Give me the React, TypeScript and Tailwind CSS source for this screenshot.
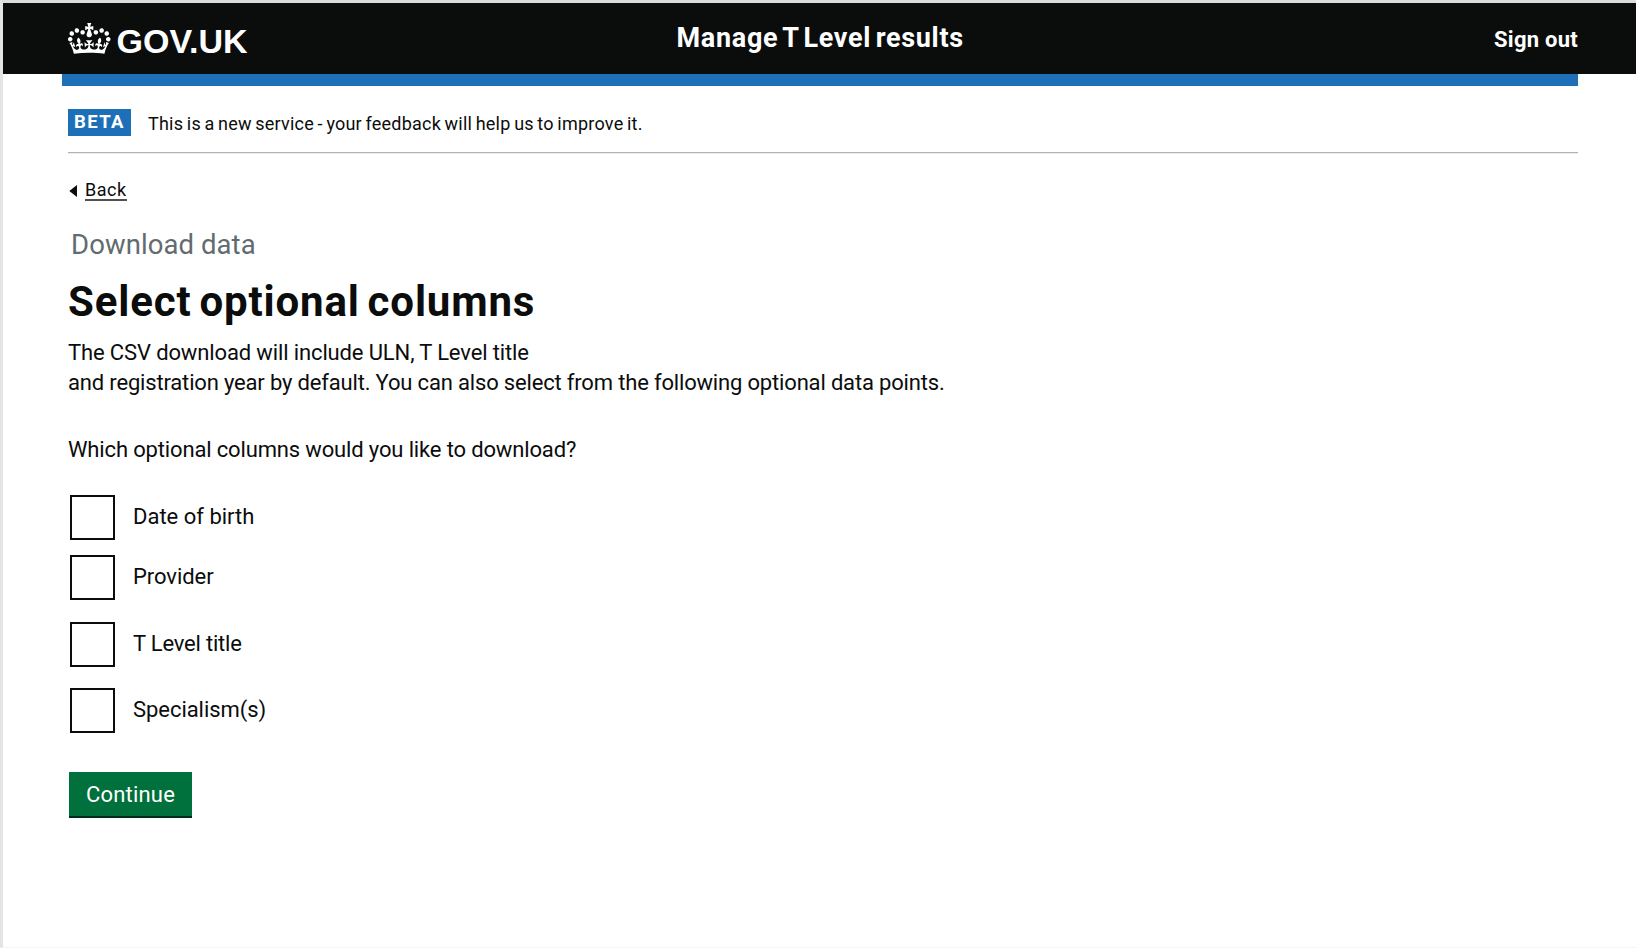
function Crown() {
  return (
    <svg viewBox="0 0 132 97" preserveAspectRatio="none" className="mt-[19.5px] h-[31px] w-[42.5px] shrink-0 fill-white" aria-hidden="true">
      <path d="M25 30.2c3.5 1.5 7.7-.2 9.1-3.7 1.5-3.6-.2-7.8-3.9-9.2-3.6-1.4-7.6.3-9.1 3.9-1.4 3.5.3 7.5 3.9 9zM9 39.5c3.6 1.5 7.8-.2 9.2-3.7 1.5-3.6-.2-7.8-3.9-9.1-3.6-1.5-7.6.2-9.1 3.8-1.4 3.5.3 7.5 3.8 9zM4.4 57.2c3.5 1.5 7.7-.2 9.1-3.8 1.5-3.6-.2-7.7-3.9-9.1-3.5-1.5-7.6.3-9.1 3.8-1.4 3.5.3 7.6 3.9 9.1zm38.3-21.4c3.5 1.5 7.7-.2 9.1-3.8 1.5-3.6-.2-7.7-3.9-9.1-3.6-1.5-7.6.3-9.1 3.8-1.3 3.6.4 7.7 3.9 9.1zm64.4-5.6c-3.6 1.5-7.8-.2-9.1-3.7-1.5-3.6.2-7.8 3.8-9.2 3.6-1.4 7.7.3 9.2 3.9 1.3 3.5-.4 7.5-3.9 9zm15.9 9.3c-3.6 1.5-7.7-.2-9.1-3.7-1.5-3.6.2-7.8 3.7-9.1 3.6-1.5 7.7.2 9.2 3.8 1.5 3.5-.3 7.5-3.8 9zm4.7 17.7c-3.6 1.5-7.8-.2-9.2-3.8-1.5-3.6.2-7.7 3.9-9.1 3.6-1.5 7.7.3 9.2 3.8 1.3 3.5-.4 7.6-3.9 9.1zM89.3 35.8c-3.6 1.5-7.8-.2-9.2-3.8-1.4-3.6.2-7.7 3.9-9.1 3.6-1.5 7.7.3 9.2 3.8 1.4 3.6-.3 7.7-3.9 9.1zM69.7 17.7l8.9 4.7V9.3l-8.9 2.8c-.2-.3-.5-.6-.9-.9L72.4 0H59.6l3.5 11.2c-.3.3-.6.5-.9.9l-8.8-2.8v13.1l8.8-4.7c.3.3.6.7.9.9l-5 15.4v.1c-.2.8-.4 1.6-.4 2.4 0 4.1 3.1 7.5 7 8.1h.2c.3 0 .7.1 1 .1.4 0 .7 0 1-.1h.2c4-.6 7.1-4.1 7.1-8.1 0-.8-.1-1.7-.4-2.4V34l-5.1-15.4c.4-.2.7-.6 1-.9zM66 92.8c16.9 0 32.8 1.1 47.1 3.2 4-16.9 8.9-26.7 14-33.5l-9.6-3.4c1 4.9 1.1 7.2 0 10.2-1.5-1.4-3-4.3-4.2-8.7L108.6 76c2.8-2 5-3.2 7.5-3.3-4.4 9.4-10 11.9-13.6 11.2-4.3-.8-6.3-4.6-5.6-7.9 1-4.7 5.7-5.9 8-.5 4.3-8.7-3-11.4-7.6-8.8 7.1-7.2 7.9-13.5 2.1-21.1-8 6.1-8.1 12.3-4.5 20.8-4.7-5.4-12.1-2.5-9.5 6.2 3.4-5.2 7.9-2 7.2 3.1-.6 4.3-6.4 7.8-13.5 7.2-10.3-.9-10.9-8-11.2-13.8 2.5-.5 7.1 1.8 11 7.3L80.2 60c-4.1 4.4-8 5.3-12.3 5.4 1.4-4.4 8-11.6 8-11.6H55.5s6.4 7.2 7.9 11.6c-4.2-.1-8-1-12.3-5.4l1.4 16.4c3.9-5.5 8.5-7.7 10.9-7.3-.3 5.8-.9 12.8-11.1 13.8-7.2.6-12.9-2.9-13.5-7.2-.7-5 3.8-8.3 7.1-3.1 2.7-8.7-4.6-11.6-9.4-6.2 3.7-8.5 3.6-14.7-4.6-20.8-5.8 7.6-5 13.9 2.2 21.1-4.7-2.6-11.9.1-7.7 8.8 2.3-5.5 7.1-4.2 8.1.5.7 3.3-1.3 7.1-5.7 7.9-3.5.7-9-1.8-13.5-11.2 2.5.1 4.7 1.3 7.5 3.3l-4.7-15.4c-1.2 4.4-2.7 7.2-4.3 8.7-1.1-3-.9-5.3 0-10.2l-9.5 3.4c5 6.9 9.9 16.7 14 33.5 14.8-2.1 30.8-3.2 47.7-3.2z" />
    </svg>
  );
}

const columns = [
  { label: "Date of birth", row: "", text: "pl-[18px]" },
  { label: "Provider", row: "mt-[15px]", text: "pl-[18px] tracking-[-0.05px]" },
  { label: "T Level title", row: "mt-[22px]", text: "pl-[18px] tracking-[-0.2px]" },
  { label: "Specialism(s)", row: "mt-[21px]", text: "pl-[18px] tracking-[-0.05px]" },
];

export default function App() {
  return (
    <div className="h-[948px] w-full overflow-hidden border-t-[3px] border-b border-l-[3px] border-t-[#dcdcdc] border-b-[#f5f5f5] border-l-[#e4e4e4] bg-white font-['Roboto',sans-serif] text-[#0b0c0c]">
      <header className="flex h-[71px] bg-[#0b0c0c] pr-[58px] pl-[65px] font-bold whitespace-nowrap text-white">
        <a className="flex w-[608.5px] items-start">
          <Crown />
          <span className="mt-[20.5px] ml-[6px] font-['Liberation_Sans',sans-serif] text-[34px] leading-[34px]">GOV.UK</span>
        </a>
        <span className="text-[27px] leading-[70px] tracking-[0.68px] [word-spacing:-2.8px]">Manage T Level results</span>
        <a className="ml-auto text-[22px] leading-[73px] tracking-[0.25px]">Sign out</a>
      </header>
      <div className="mr-[58px] ml-[59px] h-3 bg-[#1d70b8]" />

      <main className="pr-[58px] pl-[65px]">
        <div className="flex border-b border-[#b1b4b6] pt-[23px] pb-4 shadow-[0_1px_0_#ececec]">
          <strong className="h-[27px] w-[63px] bg-[#1d70b8] pl-[6px] text-[18.5px] leading-[27px] font-bold tracking-[1.37px] text-white">BETA</strong>
          <span className="h-[27px] pl-[17px] text-[18px] leading-[29px] tracking-[0.22px] [word-spacing:-1.1px]">
            This is a new service - your feedback will help us to improve it.
          </span>
        </div>

        <a className="mt-[25px] flex h-6 items-start">
          <svg viewBox="0 0 8 12" className="mt-[7px] ml-px h-3 w-2 fill-current" aria-hidden="true">
            <path d="M0.3 6 8 0v12z" />
          </svg>
          <span className="ml-2 h-[23px] border-b-2 border-[#4f5050] text-[18px] leading-6 tracking-[0.5px]">Back</span>
        </a>

        <p className="mt-[25px] pl-[3px] text-[27.5px] leading-9 tracking-[0.08px] text-[#626b6f]">Download data</p>
        <h1 className="mt-[14px] text-[42px] leading-[50px] font-bold tracking-[0.85px] [word-spacing:-3.4px]">Select optional columns</h1>

        <p className="mt-[11px] text-[22px] leading-[30px] tracking-[-0.17px]">
          <span className="tracking-[-0.13px]">The CSV download will include ULN, T Level title</span>
          <br />
          and registration year by default. You can also select from the following optional data points.
        </p>
        <p className="mt-[37px] text-[22px] leading-[30px] tracking-[-0.15px]">Which optional columns would you like to download?</p>

        <div className="mt-[30px] pl-[2px]">
          {columns.map((c) => (
            <label key={c.label} className={`flex h-[45px] text-[22px] leading-[43px] ${c.row}`}>
              <span className="size-[45px] border-2 border-[#0b0c0c]" />
              <span className={c.text}>{c.label}</span>
            </label>
          ))}
        </div>

        <button className="mt-[39px] ml-px block h-[46px] w-[123px] border-b-2 border-[#002d18] bg-[#00703c] pt-px text-[22px] leading-[43px] tracking-[0.2px] text-white">
          Continue
        </button>
      </main>
    </div>
  );
}
